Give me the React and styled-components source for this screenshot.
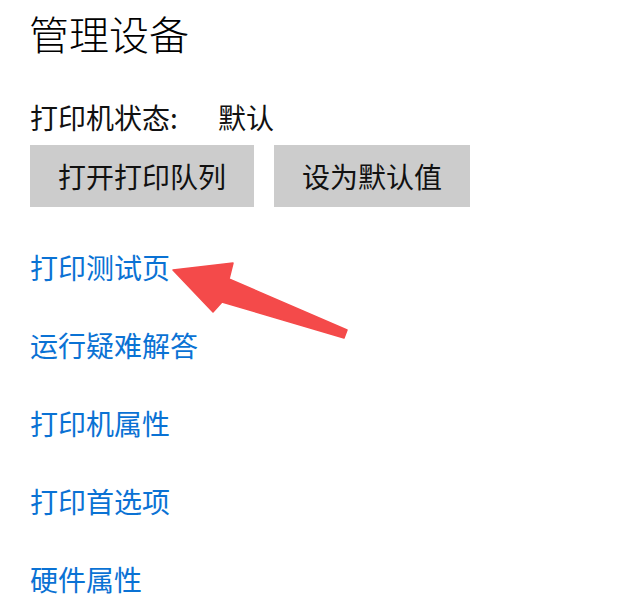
import React from "react";
import styled, { createGlobalStyle } from "styled-components";

const links = ["打印测试页", "运行疑难解答", "打印机属性", "打印首选项", "硬件属性"];

const App = () => {
  return (
    <Page>
      <GlobalStyle />
      <Title>管理设备</Title>
      <StatusRow>
        <StatusLabel>打印机状态:</StatusLabel>
        <span>默认</span>
      </StatusRow>
      <ButtonRow>
        <GrayButton>打开打印队列</GrayButton>
        <GrayButton>设为默认值</GrayButton>
      </ButtonRow>
      <LinkList>
        {links.map((text) => (
          <LinkItem key={text} href="#">
            {text}
          </LinkItem>
        ))}
      </LinkList>
      <Arrow width="623" height="611" viewBox="0 0 623 611">
        <polygon
          points="173,270 233,263 229,279 347,330 344,338 222,302 213,312"
          fill="#f44a4a"
          stroke="#f44a4a"
          strokeWidth="1.5"
          strokeLinejoin="round"
        />
      </Arrow>
    </Page>
  );
};

export default App;

const GlobalStyle = createGlobalStyle`
  html, body {
    margin: 0;
    background: #fff;
  }
  body {
    font-family: "Noto Sans CJK SC", "Noto Sans", sans-serif;
  }
`;

const Page = styled.div`
  position: relative;
  width: 623px;
  height: 611px;
  box-sizing: border-box;
  padding: 8px 0 0 30px;
  overflow: hidden;
`;

const Title = styled.h1`
  margin: 0 0 0 -1px;
  font-size: 40px;
  font-weight: 300;
  line-height: 50px;
  color: #000;
`;

const StatusRow = styled.div`
  display: flex;
  margin-top: 39px;
  font-size: 28px;
  line-height: 40px;
  color: #111;
`;

const StatusLabel = styled.span`
  width: 188px;
`;

const ButtonRow = styled.div`
  display: flex;
  gap: 20px;
  margin-top: 8px;
`;

const GrayButton = styled.button`
  height: 62px;
  padding: 0 28px;
  border: none;
  border-radius: 0;
  background: #cccccc;
  color: #111;
  font-family: inherit;
  font-size: 28px;
  line-height: 62px;
  cursor: pointer;
`;

const LinkList = styled.div`
  display: flex;
  flex-direction: column;
  align-items: flex-start;
  gap: 38px;
  margin-top: 40px;
`;

const LinkItem = styled.a`
  font-size: 28px;
  line-height: 40px;
  color: #0a72d4;
  text-decoration: none;
`;

const Arrow = styled.svg`
  position: absolute;
  left: 0;
  top: 0;
  pointer-events: none;
`;
